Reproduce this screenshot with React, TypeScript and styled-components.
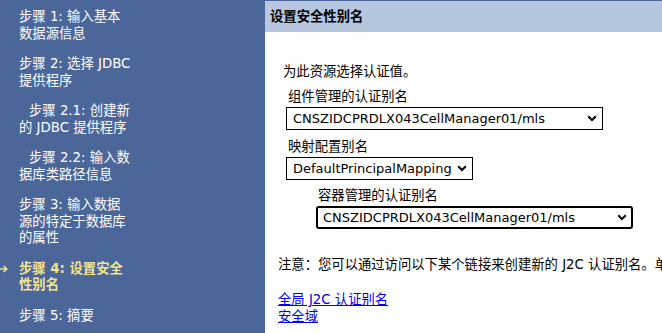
import styled, { createGlobalStyle } from 'styled-components';

const GlobalStyle = createGlobalStyle`
  html, body {
    margin: 0;
    padding: 0;
    background: #fff;
    overflow: hidden;
  }
  body {
    font-family: 'DejaVu Sans', 'Noto Sans CJK SC', sans-serif;
    font-size: 13.33px;
    color: #000;
  }
`;

const Page = styled.div`
  display: flex;
  width: 662px;
  height: 333px;
  overflow: hidden;
`;

const Sidebar = styled.div`
  width: 265px;
  flex-shrink: 0;
  background: #4b6699;
  padding-top: 9px;
  box-sizing: border-box;
  display: flex;
  flex-direction: column;
  gap: 14px;
`;

const StepItem = styled.div<{ $current?: boolean }>`
  display: flex;
  color: ${(p) => (p.$current ? '#f3e48c' : '#fff')};
  font-weight: ${(p) => (p.$current ? 'bold' : 'normal')};
  line-height: 16.5px;
`;

const Marker = styled.div`
  width: 19px;
  flex-shrink: 0;
  display: flex;
  align-items: flex-start;
  padding-top: 4px;
  box-sizing: border-box;
`;

const StepLine = styled.div<{ $indent?: boolean }>`
  padding-left: ${(p) => (p.$indent ? '10px' : '0')};
`;

const Main = styled.div`
  flex: 1;
  min-width: 0;
  border-top: 1px solid #4b6699;
  overflow: hidden;
`;

const Header = styled.div`
  height: 31px;
  line-height: 31px;
  background: #b6c6df;
  padding-left: 5px;
  font-weight: bold;
`;

const Content = styled.div`
  padding: 32px 0 0 13px;
  line-height: 16px;
`;

const Form = styled.div`
  margin-left: 5px;
`;

const Intro = styled.div``;

const Field = styled.div<{ $nested?: boolean }>`
  margin-left: ${(p) => (p.$nested ? '33px' : '3px')};
  margin-top: ${(p) => (p.$nested ? '8px' : '9px')};
`;

const FieldLabel = styled.div`
  padding-left: 2px;
  margin-bottom: 2px;
`;

const SelectBox = styled.div<{ $width: number; $focused?: boolean }>`
  width: ${(p) => p.$width}px;
  height: 23px;
  box-sizing: border-box;
  display: flex;
  align-items: center;
  justify-content: space-between;
  border: ${(p) => (p.$focused ? '2px' : '1px')} solid #000;
  border-radius: ${(p) => (p.$focused ? '3px' : '0')};
  padding: 0 ${(p) => (p.$focused ? '4px' : '5px')} 0
    ${(p) => (p.$focused ? '5px' : '6px')};
  background: #fff;
  white-space: nowrap;
  font-size: 13px;
`;

const Note = styled.div`
  margin-top: 28px;
  white-space: nowrap;
`;

const Links = styled.div`
  margin-top: 18px;
  display: flex;
  flex-direction: column;
  line-height: 17px;
`;

const Link = styled.a`
  color: #0000ee;
  text-decoration: underline;
  align-self: flex-start;
`;

const Chevron = () => (
  <svg width="10" height="7" viewBox="0 0 10 7">
    <path d="M1.2 1.3 L5 5 L8.8 1.3" fill="none" stroke="#000" strokeWidth="2" />
  </svg>
);

const Arrow = () => (
  <svg width="8" height="8" viewBox="0 0 8 8">
    <path d="M0 4 H6.5 M3.6 1 L6.8 4 L3.6 7" fill="none" stroke="#f3e48c" strokeWidth="1.6" />
  </svg>
);

const Select = ({ value, width, focused }: { value: string; width: number; focused?: boolean }) => (
  <SelectBox $width={width} $focused={focused}>
    <span>{value}</span>
    <Chevron />
  </SelectBox>
);

const steps = [
  { lines: ['步骤 1: 输入基本', '数据源信息'] },
  { lines: ['步骤 2: 选择 JDBC', '提供程序'] },
  { lines: ['步骤 2.1: 创建新', '的 JDBC 提供程序'], sub: true },
  { lines: ['步骤 2.2: 输入数', '据库类路径信息'], sub: true },
  { lines: ['步骤 3: 输入数据', '源的特定于数据库', '的属性'] },
  { lines: ['步骤 4: 设置安全', '性别名'], current: true },
  { lines: ['步骤 5: 摘要'] },
];

export default function App() {
  return (
    <>
      <GlobalStyle />
      <Page>
        <Sidebar>
          {steps.map((s, i) => (
            <StepItem key={i} $current={s.current}>
              <Marker>{s.current && <Arrow />}</Marker>
              <div>
                {s.lines.map((l, j) => (
                  <StepLine key={j} $indent={s.sub && j === 0}>
                    {l}
                  </StepLine>
                ))}
              </div>
            </StepItem>
          ))}
        </Sidebar>
        <Main>
          <Header>设置安全性别名</Header>
          <Content>
            <Form>
              <Intro>为此资源选择认证值。</Intro>
              <Field>
                <FieldLabel>组件管理的认证别名</FieldLabel>
                <Select value="CNSZIDCPRDLX043CellManager01/mls" width={317} />
              </Field>
              <Field>
                <FieldLabel>映射配置别名</FieldLabel>
                <Select value="DefaultPrincipalMapping" width={187} />
              </Field>
              <Field $nested>
                <FieldLabel>容器管理的认证别名</FieldLabel>
                <Select value="CNSZIDCPRDLX043CellManager01/mls" width={317} focused />
              </Field>
            </Form>
            <Note>注意：您可以通过访问以下某个链接来创建新的 J2C 认证别名。单击链接后，将打开新窗口。</Note>
            <Links>
              <Link href="#">全局 J2C 认证别名</Link>
              <Link href="#">安全域</Link>
            </Links>
          </Content>
        </Main>
      </Page>
    </>
  );
}
